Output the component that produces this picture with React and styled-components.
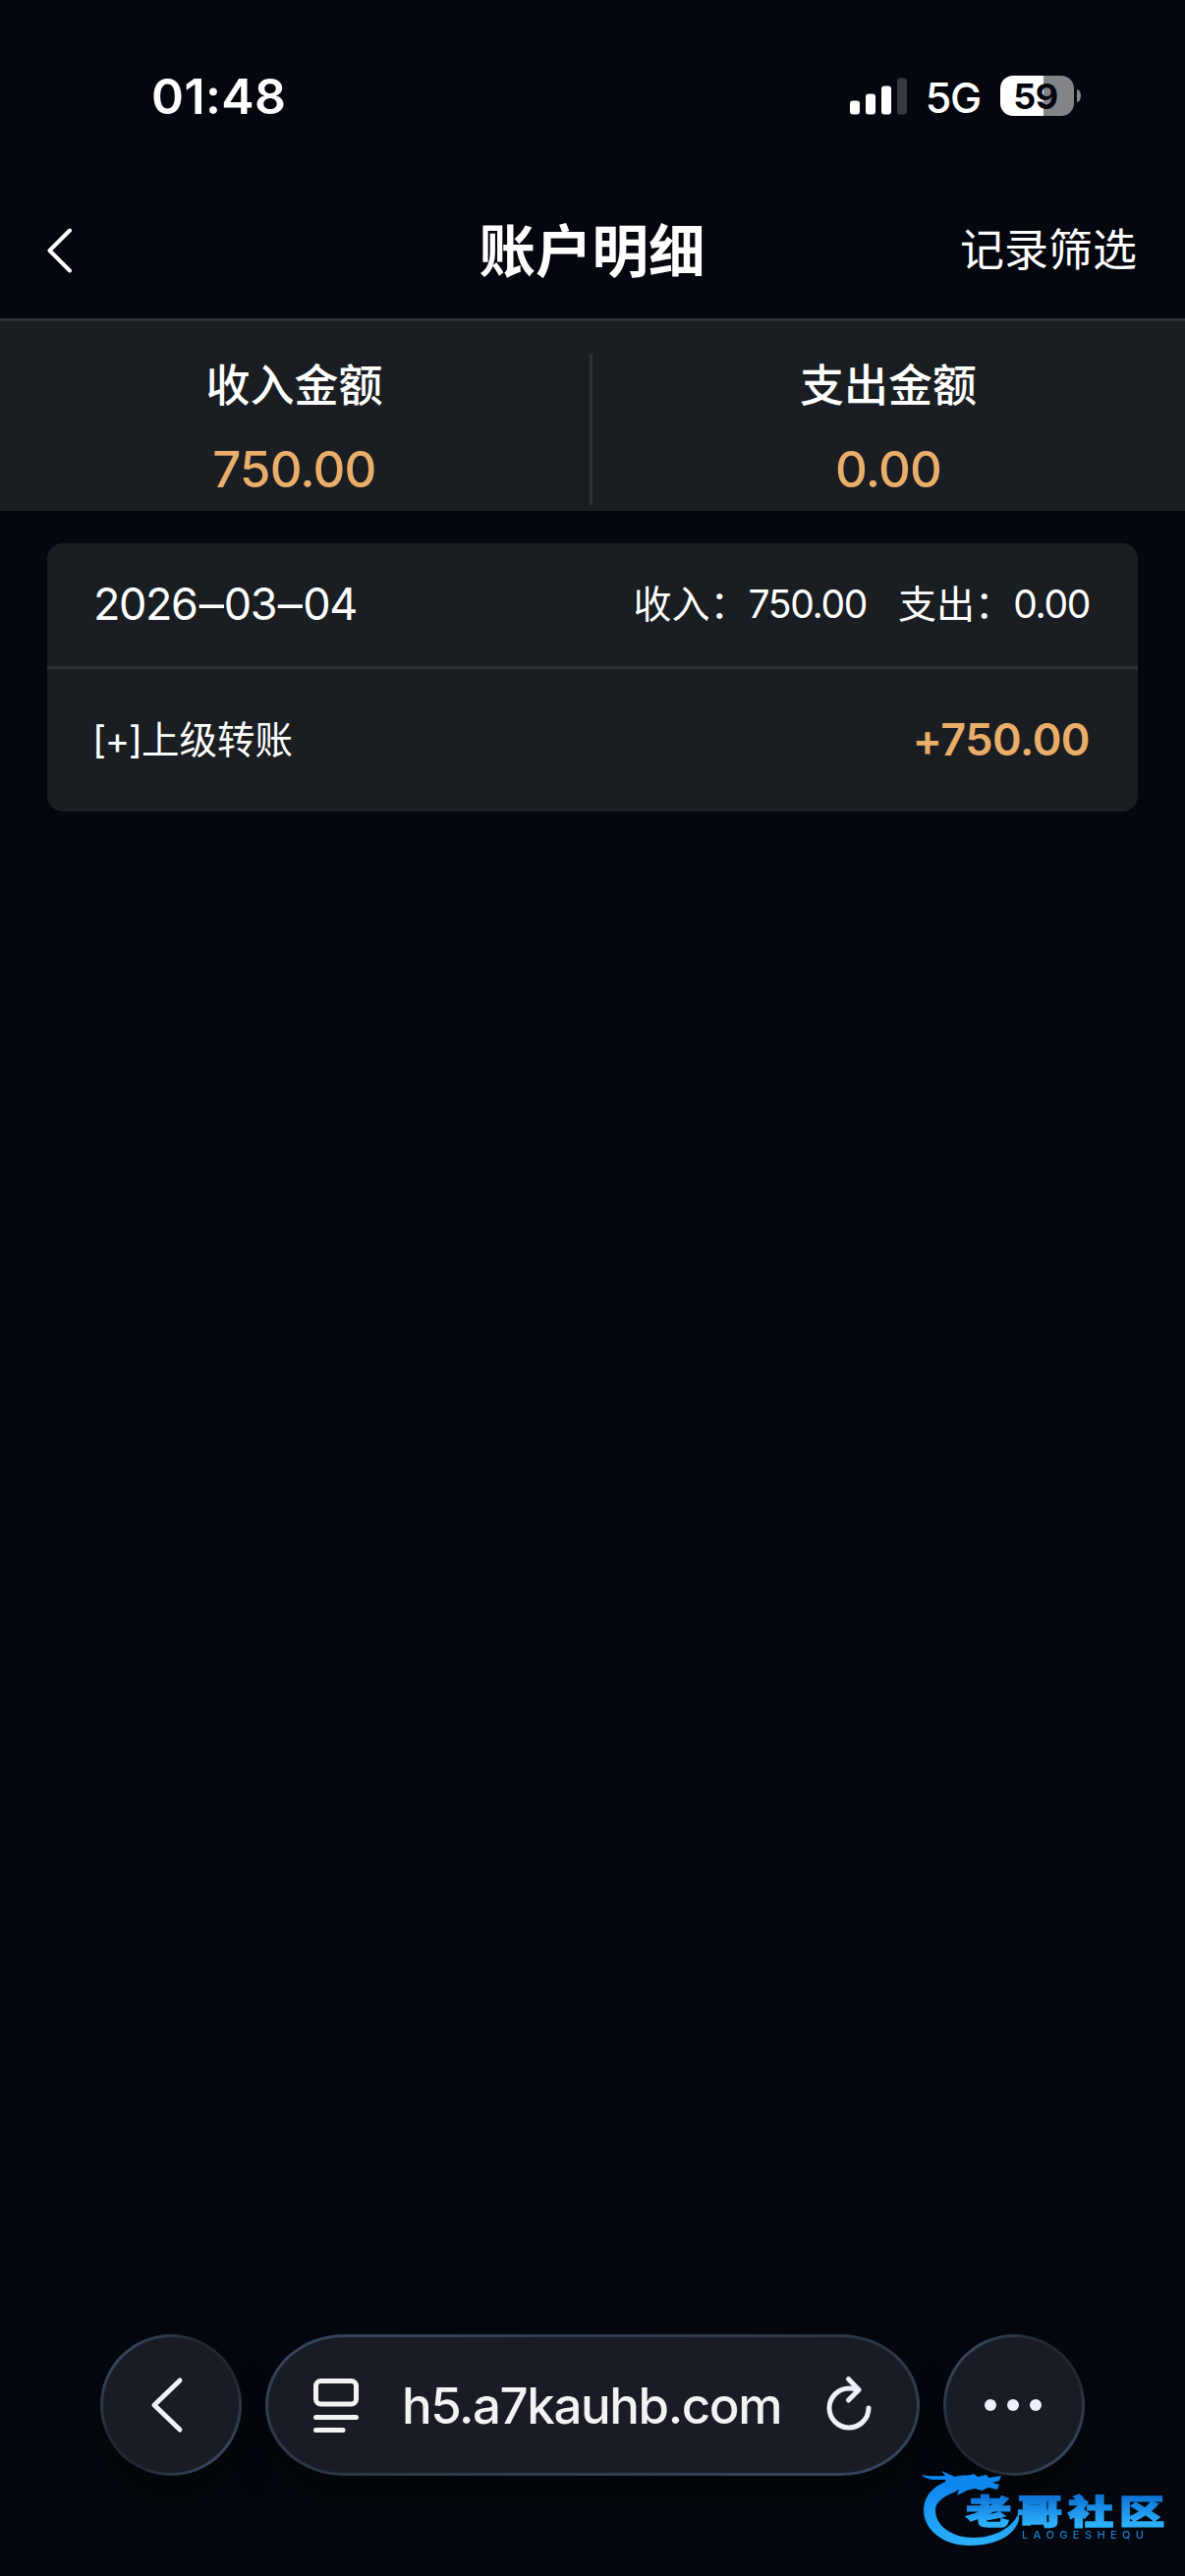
import React from 'react';
import styled, { createGlobalStyle } from 'styled-components';

const GlobalStyle = createGlobalStyle`
  * {
    box-sizing: border-box;
  }
  body {
    margin: 0;
    background: #04070e;
    color: #ffffff;
    font-family: Inter, 'Noto Sans CJK SC', sans-serif;
  }
`;

const Screen = styled.div`
  position: relative;
  display: flex;
  flex-direction: column;
  width: 1206px;
  height: 2622px;
  background: #04070e;
  overflow: hidden;
  white-space: nowrap;
`;

const StatusBar = styled.div`
  display: flex;
  align-items: center;
  justify-content: space-between;
  height: 182px;
  padding: 13px 106px 0 154px;
`;

const Time = styled.div`
  font-size: 50px;
  font-weight: 600;
  line-height: 60px;
  letter-spacing: 0.4px;
`;

const StatusRight = styled.div`
  display: flex;
  align-items: center;
`;

const Network = styled.div`
  margin: 2px 20px 0 19px;
  font-size: 43px;
  font-weight: 500;
  line-height: 50px;
  letter-spacing: -1.2px;
`;

const Battery = styled.div`
  display: flex;
  align-items: center;
  justify-content: center;
  width: 75px;
  height: 41px;
  padding-right: 3px;
  border-radius: 13px;
  background: linear-gradient(to right, #ffffff 44px, #838488 44px);
  color: #04070e;
  font-size: 36px;
  font-weight: 700;
  letter-spacing: -0.5px;
`;

const BatteryCap = styled.div`
  width: 4px;
  height: 13px;
  margin-left: 3px;
  border-radius: 0 4px 4px 0 / 0 6px 6px 0;
  background: #838488;
`;

const Header = styled.div`
  display: grid;
  grid-template-columns: 1fr auto 1fr;
  align-items: center;
  height: 145px;
  padding: 0 49px 0 45px;
  border-bottom: 3px solid #2d3035;
`;

const BackIcon = styled.svg`
  width: 32px;
  height: 50px;
  margin-top: 4px;
`;

const Title = styled.h1`
  margin: 5px 0 0 3px;
  font-size: 57.5px;
  font-weight: 700;
  line-height: 80px;
`;

const Filter = styled.div`
  justify-self: end;
  margin-top: 4px;
  font-size: 45px;
  line-height: 64px;
`;

const Summary = styled.div`
  display: grid;
  grid-template-columns: 1fr 1fr;
  height: 193px;
  padding: 33px 0 6px;
  background: #1a1d21;
`;

const SummaryItem = styled.div`
  display: flex;
  flex-direction: column;
  align-items: center;
  padding-top: 1px;
  border-right: ${(props) => (props.$divided ? '3px solid #2d3035' : 'none')};
`;

const SummaryLabel = styled.div`
  margin-right: 1px;
  font-size: 45px;
  font-weight: 500;
  line-height: 64px;
`;

const SummaryValue = styled.div`
  margin: 22px 1px 0 0;
  font-size: 51px;
  font-weight: 500;
  line-height: 62px;
  letter-spacing: -0.9px;
  color: #e9ae69;
`;

const Card = styled.div`
  margin: 33px 48px 0;
  border-radius: 16px;
  background: #1a1d21;
`;

const CardRow = styled.div`
  display: flex;
  align-items: center;
  justify-content: space-between;
  height: ${(props) => props.$height}px;
  padding: 0 49px 2px 47px;
  border-bottom: ${(props) => (props.$line ? '3px solid #2d3035' : 'none')};
`;

const DateText = styled.div`
  font-size: 45px;
  line-height: 54px;
  letter-spacing: -1.4px;
`;

const Dash = styled.span`
  display: inline-block;
  margin: 0 3px;
  transform: scaleX(1.12);
`;

const Totals = styled.div`
  display: flex;
  gap: 32px;
  font-size: 39px;
  line-height: 56px;
`;

const Num = styled.span`
  letter-spacing: -1.3px;
`;

const EntryName = styled.div`
  margin-left: -1px;
  font-size: 38.5px;
  line-height: 56px;
`;

const Bracket = styled.span`
  letter-spacing: -1.2px;
`;

const EntryAmount = styled.div`
  font-size: 45px;
  font-weight: 600;
  line-height: 54px;
  letter-spacing: -0.5px;
  color: #e9ae69;
`;

const BrowserBar = styled.div`
  display: flex;
  gap: 24px;
  margin: auto 102px 102px;
`;

const glass = `
  border: 3px solid transparent;
  background:
    linear-gradient(#191c24, #191c24) padding-box,
    linear-gradient(135deg, #35445a 15%, #212731 38%, #212731 62%, #35445a 85%) border-box;
  box-shadow: 0 24px 30px rgba(4, 8, 8, 0.8);
`;

const RoundButton = styled.div`
  display: flex;
  align-items: center;
  justify-content: center;
  width: 144px;
  height: 144px;
  border-radius: 50%;
  ${glass}
`;

const BackButton = styled(RoundButton)`
  padding-right: 7px;
`;

const AddressBar = styled.div`
  display: flex;
  align-items: center;
  flex: 1;
  height: 144px;
  padding: 0 45px 0 44px;
  border-radius: 80px / 72px;
  ${glass}
  background:
    linear-gradient(#191c24, #191c24) padding-box,
    linear-gradient(168deg, #35445a 10%, #2b3645 50%, #35445a 90%) border-box;
`;

const Url = styled.div`
  flex: 1;
  padding: 2px 3px 0 0;
  text-align: center;
  color: #f3f3f3;
  font-size: 51px;
  font-weight: 500;
  line-height: 62px;
  letter-spacing: -1.4px;
`;

const Watermark = styled.svg`
  position: absolute;
  right: 16px;
  bottom: 26px;
  width: 256px;
  height: 84px;
  overflow: visible;
  filter: blur(0.6px);
`;

const SignalIcon = () => (
  <svg width="58" height="38" viewBox="0 0 58 38" fill="#ffffff">
    <rect x="0" y="23.5" width="10" height="14" rx="3" />
    <rect x="16" y="16.5" width="10" height="21" rx="3" />
    <rect x="32" y="8.5" width="10" height="29" rx="3" />
    <rect x="48" y="0.5" width="10" height="37" rx="3" fill="#36393f" />
  </svg>
);

const PageIcon = () => (
  <svg width="50" height="58" viewBox="0 0 50 58" fill="none" stroke="#f3f3f3" strokeWidth="5" strokeLinecap="round">
    <rect x="4.5" y="4.5" width="41" height="23.5" rx="5" />
    <path d="M4.5 41.5H45.5M4.5 54.5H32" />
  </svg>
);

const ReloadIcon = () => (
  <svg
    width="48"
    height="58"
    viewBox="0 0 48 58"
    fill="none"
    stroke="#eef1fb"
    strokeWidth="5"
    strokeLinecap="round"
    strokeLinejoin="round"
  >
    <path d="M44 32A20 20 0 1 1 24 12Q29 12 33 13.5" />
    <path d="M23.5 2.5L34 13.5L23.5 24" />
  </svg>
);

const Brand = () => (
  <Watermark viewBox="0 0 256 84">
    <defs>
      <linearGradient id="ring" x1="0" y1="0" x2="0" y2="1">
        <stop offset="0" stopColor="#0b82ee" />
        <stop offset="1" stopColor="#2cb0fb" />
      </linearGradient>
      <linearGradient id="name" x1="0" y1="0" x2="0" y2="1">
        <stop offset="0.25" stopColor="#0f74d6" />
        <stop offset="0.8" stopColor="#2cb0fb" />
      </linearGradient>
    </defs>
    <path
      fill="url(#ring)"
      d="M38 11C20 15 6 26 6 43C6 63 26 79 53 79C78 79 98 70 103 53V45C97 61 78 71 57 71C35 71 18 59 18 43C18 35 26 29 39 24Z"
    />
    {/* dragon head with whiskers and mane */}
    <path
      fill="#0e87ef"
      d="M4 7C11 9 19 8 28 8L24 3L38 9C46 6 52 9 57 6L61 9L70 7L72 10L85 8L83 13L76 15L83 17L81 22L72 20L65 23L58 21L50 23L40 28L42 22L34 26L36 20L30 17L28 12C20 12 9 13 4 7Z"
    />
    <text
      fill="url(#name)"
      stroke="url(#name)"
      strokeWidth="1.5"
      fontFamily="'Noto Sans CJK SC', sans-serif"
      fontSize="34.5"
      fontWeight="900"
      letterSpacing="4.3"
      transform="translate(49 57) scale(1.34 1)"
    >
      老哥社区
    </text>
    <text
      x="106"
      y="72"
      fill="#1d7fca"
      fontFamily="Inter, sans-serif"
      fontSize="11"
      fontWeight="500"
      textLength="124"
      lengthAdjust="spacing"
    >
      LAOGESHEQU
    </text>
  </Watermark>
);

const App = () => {
  return (
    <Screen>
      <GlobalStyle />
      <StatusBar>
        <Time>01:48</Time>
        <StatusRight>
          <SignalIcon />
          <Network>5G</Network>
          <Battery>59</Battery>
          <BatteryCap />
        </StatusRight>
      </StatusBar>

      <Header>
        <BackIcon viewBox="0 0 32 50" fill="none" stroke="#ffffff" strokeWidth="4" strokeLinecap="round">
          <path d="M26 4.5L5.5 25L26 45.5" strokeLinejoin="round" />
        </BackIcon>
        <Title>账户明细</Title>
        <Filter>记录筛选</Filter>
      </Header>

      <Summary>
        <SummaryItem $divided>
          <SummaryLabel>收入金额</SummaryLabel>
          <SummaryValue>750.00</SummaryValue>
        </SummaryItem>
        <SummaryItem>
          <SummaryLabel>支出金额</SummaryLabel>
          <SummaryValue>0.00</SummaryValue>
        </SummaryItem>
      </Summary>

      <Card>
        <CardRow $height={128} $line>
          <DateText>
            2026<Dash>–</Dash>03<Dash>–</Dash>04
          </DateText>
          <Totals>
            <div>
              收入：<Num>750.00</Num>
            </div>
            <div>
              支出：<Num>0.00</Num>
            </div>
          </Totals>
        </CardRow>
        <CardRow $height={145}>
          <EntryName>
            <Bracket>[+]</Bracket>上级转账
          </EntryName>
          <EntryAmount>+750.00</EntryAmount>
        </CardRow>
      </Card>

      <BrowserBar>
        <BackButton>
          <svg width="40" height="62" viewBox="0 0 40 62" fill="none" stroke="#f0f3fc" strokeWidth="5">
            <path d="M32 6L6 31L32 56" strokeLinecap="round" strokeLinejoin="round" />
          </svg>
        </BackButton>
        <AddressBar>
          <PageIcon />
          <Url>h5.a7kauhb.com</Url>
          <ReloadIcon />
        </AddressBar>
        <RoundButton>
          <svg width="60" height="12" viewBox="0 0 60 12" fill="#eef1fb">
            <circle cx="6" cy="6" r="6" />
            <circle cx="29" cy="6" r="6" />
            <circle cx="52" cy="6" r="6" />
          </svg>
        </RoundButton>
      </BrowserBar>

      <Brand />
    </Screen>
  );
};

export default App;
